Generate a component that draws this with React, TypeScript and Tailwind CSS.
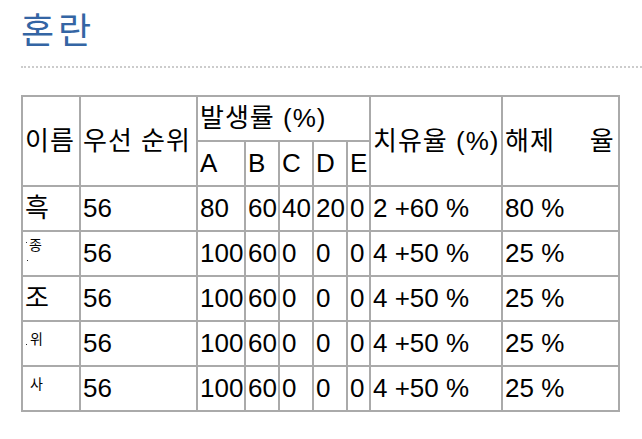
import React from "react";

const cell =
  "border border-[#aaa] px-[2px] py-0 align-middle text-left font-normal text-[26px] leading-normal whitespace-nowrap overflow-visible";

const head = cell + " tracking-[1px]";

type Row = { name: React.ReactNode; small: boolean; vals: string[] };

const rows: Row[] = [
  {
    name: <span>흑</span>,
    small: false,
    vals: ["56", "80", "60", "40", "20", "0", "2 +60 %", "80 %"],
  },
  {
    name: (
      <div className="flex flex-col items-start text-[14px] leading-[16px] pt-[5px] pl-[4px]">
        <span className="relative">
          <span className="absolute left-[-3px] top-[5px] block h-[1px] w-[1px] bg-[#333]" />
          종
        </span>
        <span className="mt-[7px] ml-[-2px] block h-[1px] w-[1px] bg-[#222]" />
      </div>
    ),
    small: true,
    vals: ["56", "100", "60", "0", "0", "0", "4 +50 %", "25 %"],
  },
  {
    name: <span>조</span>,
    small: false,
    vals: ["56", "100", "60", "0", "0", "0", "4 +50 %", "25 %"],
  },
  {
    name: (
      <div className="flex items-end text-[14px] leading-[16px] pt-[9px] pl-[1px]">
        <span className="mb-[2px] mr-[3px] block h-[1px] w-[1px] bg-[#222]" />
        <span>위</span>
      </div>
    ),
    small: true,
    vals: ["56", "100", "60", "0", "0", "0", "4 +50 %", "25 %"],
  },
  {
    name: (
      <div className="text-[14px] leading-[16px] pt-[9px] pl-[5px]">
        <span>사</span>
      </div>
    ),
    small: true,
    vals: ["56", "100", "60", "0", "0", "0", "4 +50 %", "25 %"],
  },
];

export default function App() {
  return (
    <div className="min-h-[439px] bg-white pl-[21px] pt-[10px] font-['Liberation_Sans','Noto_Sans_CJK_KR',sans-serif] text-black">
      <h1 className="m-0 text-[36px] leading-[36px] font-normal tracking-[4px] text-[#3465a4] font-['Noto_Sans_CJK_KR',sans-serif]">
        혼란
      </h1>
      <div className="mt-[20px] border-t-2 border-dotted border-[#cccccc]" />
      <table className="mt-[27px] w-[599px] table-fixed border-separate border-spacing-0 border border-[#aaa]">
        <colgroup>
          <col className="w-[58px]" />
          <col className="w-[117px]" />
          <col className="w-[48px]" />
          <col className="w-[34px]" />
          <col className="w-[34px]" />
          <col className="w-[34px]" />
          <col className="w-[23px]" />
          <col className="w-[132px]" />
          <col className="w-[117px]" />
        </colgroup>
        <thead>
          <tr className="h-[45px]">
            <th rowSpan={2} className={head}>
              이름
            </th>
            <th rowSpan={2} className={head}>
              우선 순위
            </th>
            <th colSpan={5} className={head}>
              발생률 (%)
            </th>
            <th rowSpan={2} className={head}>
              치유율 (%)
            </th>
            <th rowSpan={2} className={head}>
              해제<span className="inline-block w-[35px]" />율
            </th>
          </tr>
          <tr className="h-[45px]">
            <th className={cell}>A</th>
            <th className={cell}>B</th>
            <th className={cell}>C</th>
            <th className={cell}>D</th>
            <th className={cell}>E</th>
          </tr>
        </thead>
        <tbody>
          {rows.map((r, i) => (
            <tr key={i} className="h-[45px]">
              <td className={cell + " !align-top"}>
                {r.small ? (
                  r.name
                ) : (
                  <div className="flex h-[43px] items-center">{r.name}</div>
                )}
              </td>
              {r.vals.map((v, j) => (
                <td key={j} className={cell}>
                  {v}
                </td>
              ))}
            </tr>
          ))}
        </tbody>
      </table>
    </div>
  );
}
